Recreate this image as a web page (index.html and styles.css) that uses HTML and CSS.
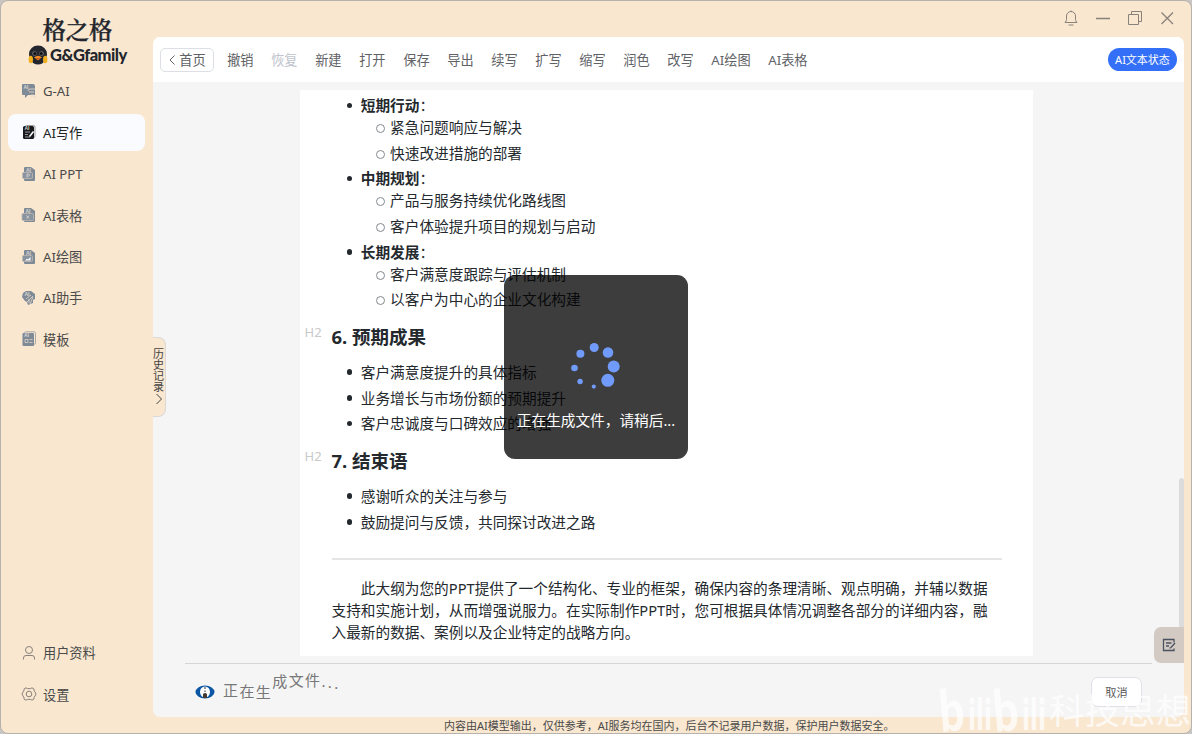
FILE: index.html
```
<!DOCTYPE html>
<html lang="zh-CN">
<head>
	<meta charset="utf-8">
	<title>AI写作</title>
	<link rel="stylesheet" href="styles.css">
</head>
<body>
<div class="window">
	<aside class="sidebar">
		<div class="logo">
			<div class="logo-cn">格之格</div>
			<div class="logo-en">
				<svg width="20" height="20" viewBox="0 0 20 20">
					<path d="M1 9a9 8.500 0 0 1 18 0c0 3-1.500 4-2.500 6.500Q15 19.500 10 19.500T3.500 15.500C2.500 13 1 12 1 9z" fill="#23262c"/>
					<ellipse cx="2.800" cy="14.500" rx="2.200" ry="3.800" fill="#f2b01e"/>
					<ellipse cx="17.200" cy="14.500" rx="2.200" ry="3.800" fill="#f2b01e"/>
					<circle cx="6.500" cy="8.500" r="2.300" fill="#6d6f75"/><circle cx="13.500" cy="8.500" r="2.300" fill="#6d6f75"/>
					<circle cx="6.800" cy="8.500" r="1.600" fill="#111"/><circle cx="13.200" cy="8.500" r="1.600" fill="#111"/>
					<path d="M6 12.500q4-3.500 8 0-1.500 1-2.200 1-.3 1.700-1.800 1.700t-1.800-1.700q-1 0-2.200-1z" fill="#f48a24"/>
					<path d="M8.500 13.300h3l-.7 1H9.200z" fill="#b43b20"/>
				</svg>
				<span>G&amp;Gfamily</span>
			</div>
		</div>
		<nav class="menu">
			<a class="item">
				<svg width="16" height="16" viewBox="0 0 16 16"><path d="M2 1h10q2 0 2 2v9H7l-3 3v-3H2q-1 0-1-1V2q0-1 1-1z" fill="#7f8a97"/><path d="M7 8q0-2 2-2h5M8 9h5M10 12h3l2 3M9 14h6" fill="none" stroke="#ecdccb" stroke-width=".8"/><text x="2.500" y="6" class="tag">AI</text></svg>
				<span>G-AI</span>
			</a>
			<a class="item active">
				<svg width="16" height="16" viewBox="0 0 16 16"><rect x="4" y="1.500" width="10" height="12" rx="1.500" fill="#fff" stroke="#999"/><rect x="2" y="2" width="11" height="13" rx="1.500" fill="#17191d"/><path d="M4 8h5M4 10.500h3M4 13h5" stroke="#bbb" stroke-width=".8"/><path d="M12.500 7.500 8.500 12.500" stroke="#fff" stroke-width="1.600"/><text x="3.500" y="6.300" class="tag">AI</text></svg>
				<span>AI写作</span>
			</a>
			<a class="item">
				<svg width="16" height="16" viewBox="0 0 16 16"><path d="M4 1h6l4 3v10q0 1-1 1H4q-1 0-1-1V2q0-1 1-1z" fill="#7f8a97"/><rect x="1.500" y="6.500" width="10" height="6" rx="1" fill="#8994a0" stroke="#bfb8b0" stroke-width=".8"/><path d="M6 11.500V8h1.500q1 0 1 1t-1 1H6" fill="none" stroke="#e5ddd2" stroke-width=".7"/><text x="5" y="5.500" class="tag">AI</text></svg>
				<span>AI PPT</span>
			</a>
			<a class="item">
				<svg width="16" height="16" viewBox="0 0 16 16"><path d="M4 1h6l4 3v10q0 1-1 1H4q-1 0-1-1V2q0-1 1-1z" fill="#7f8a97"/><rect x="1" y="6.500" width="11.500" height="7" rx="1" fill="#8994a0" stroke="#bfb8b0" stroke-width=".8"/><path d="m5.500 8.500 2.500 3m0-3-2.500 3" stroke="#e5ddd2" stroke-width=".8"/><text x="4.500" y="5.500" class="tag">AI</text></svg>
				<span>AI表格</span>
			</a>
			<a class="item">
				<svg width="16" height="16" viewBox="0 0 16 16"><path d="M4 1h6l4 3v10q0 1-1 1H4q-1 0-1-1V2q0-1 1-1z" fill="#7f8a97"/><rect x="1.500" y="6.500" width="10" height="6" rx="1" fill="#8994a0" stroke="#bfb8b0" stroke-width=".8"/><path d="m4 11.500 2-1.700 1 .7L9.500 8v3.500z" fill="#fff"/><text x="5" y="5.500" class="tag">AI</text></svg>
				<span>AI绘图</span>
			</a>
			<a class="item">
				<svg width="16" height="16" viewBox="0 0 16 16"><path d="M5 1h5l4 3v5l-2 1v3l-5 2-1-3-2-1-3-4 1-4z" fill="#7f8a97"/><path d="m5 9 5-4M6 12l6-6M9 14l3-7M8 9v4" stroke="#ecdccb" stroke-width=".8"/><text x="3.500" y="5.500" class="tag">AI</text></svg>
				<span>AI助手</span>
			</a>
			<a class="item">
				<svg width="16" height="16" viewBox="0 0 16 16"><rect x="3.500" y=".8" width="11" height="12.500" rx="1.500" fill="none" stroke="#a9a8a6"/><rect x="1.500" y="2" width="11.500" height="13" rx="1" fill="#7f8a97"/><path d="M4 8.500h3v3H4zM8.500 8.500h3M8.500 11.500h3" fill="none" stroke="#ddd3c7" stroke-width=".8"/><text x="3" y="6.300" class="tag">AI</text></svg>
				<span>模板</span>
			</a>
		</nav>
		<nav class="menu bottom">
			<a class="item">
				<svg width="16" height="16" viewBox="0 0 16 16" class="line"><circle cx="8" cy="5" r="3.500"/><path d="M2.500 14.500V13q0-2.500 2.500-2.500h6q2.500 0 2.500 2.500v1.500"/></svg>
				<span>用户资料</span>
			</a>
			<a class="item">
				<svg width="16" height="16" viewBox="0 0 16 16" class="line"><path d="M5 1.800q1.500 1.200 3 .8 1.500.4 3-.8l2 1.200q-.3 2 1 3l1 2-1 2q-1.300 1-1 3l-2 1.200q-1.500-1.200-3-.8-1.500-.4-3 .8L3 13q.3-2-1-3L1 8l1-2q1.300-1 1-3z"/><circle cx="8" cy="8" r="2.800"/></svg>
				<span>设置</span>
			</a>
		</nav>
	</aside>

	<div class="content">
		<header class="titlebar">
			<svg width="16" height="18" viewBox="0 0 16 18" class="line"><path d="M8 1.500v1M2 13.500h12q-1.500-1.500-1.500-3V7a4.500 4.500 0 0 0-9 0v3.500q0 1.500-1.500 3zM5.500 16h5"/></svg>
			<svg width="16" height="18" viewBox="0 0 16 18" class="line"><path d="M1 9.500h14" stroke-width="1.400"/></svg>
			<svg width="16" height="18" viewBox="0 0 16 18" class="line"><path d="M1.500 5.500h10v10h-10zM4.500 5V2.500h10v10H12"/></svg>
			<svg width="16" height="18" viewBox="0 0 16 18" class="line"><path d="m2.500 3.500 11.500 11.500m0-11.500L2.500 15" stroke-width="1.300"/></svg>
		</header>

		<main class="panel">
			<div class="toolbar">
				<button class="home"><svg width="8" height="12" viewBox="0 0 8 12"><path d="M6.500 1.500 2 6l4.500 4.500" fill="none" stroke="#606266"/></svg>首页</button>
				<span>撤销</span>
				<span class="disabled">恢复</span>
				<span>新建</span>
				<span>打开</span>
				<span>保存</span>
				<span>导出</span>
				<span>续写</span>
				<span>扩写</span>
				<span>缩写</span>
				<span>润色</span>
				<span>改写</span>
				<span>AI绘图</span>
				<span>AI表格</span>
				<b class="status">AI文本状态</b>
			</div>

			<div class="editor">
				<article class="paper">
					<ul>
						<li><strong>短期行动</strong>：
							<ul>
								<li>紧急问题响应与解决</li>
								<li>快速改进措施的部署</li>
							</ul>
						</li>
						<li><strong>中期规划</strong>：
							<ul>
								<li>产品与服务持续优化路线图</li>
								<li>客户体验提升项目的规划与启动</li>
							</ul>
						</li>
						<li><strong>长期发展</strong>：
							<ul>
								<li>客户满意度跟踪与评估机制</li>
								<li>以客户为中心的企业文化构建</li>
							</ul>
						</li>
					</ul>
					<h2><i class="mark">H2</i>6. 预期成果</h2>
					<ul>
						<li>客户满意度提升的具体指标</li>
						<li>业务增长与市场份额的预期提升</li>
						<li>客户忠诚度与口碑效应的增强</li>
					</ul>
					<h2><i class="mark">H2</i>7. 结束语</h2>
					<ul>
						<li>感谢听众的关注与参与</li>
						<li>鼓励提问与反馈，共同探讨改进之路</li>
					</ul>
					<hr>
					<p>此大纲为您的PPT提供了一个结构化、专业的框架，确保内容的条理清晰、观点明确，并辅以数据<br>支持和实施计划，从而增强说服力。在实际制作PPT时，您可根据具体情况调整各部分的详细内容，融<br>入最新的数据、案例以及企业特定的战略方向。</p>
				</article>
			</div>

			<div class="progress">
				<svg width="20" height="14" viewBox="0 0 20 14"><ellipse cx="10" cy="7" rx="9.500" ry="6.500" fill="#0b57a4"/><ellipse cx="10" cy="7" rx="5" ry="5.500" fill="#fff"/><path d="M8 13V9q2-2 4 0v4z" fill="#443c32"/><path d="M10 2v2M10 5.500v1.500" stroke="#333"/></svg>
				<div class="wave">
					<span>正</span><span class="w1">在</span><span class="w2">生</span><span class="w3">成</span><span class="w4">文</span><span class="w4">件</span><span class="dot w5">.</span><span class="dot w6">.</span><span class="dot w7">.</span>
				</div>
				<button class="cancel">取消</button>
			</div>

			<div class="history">历史记录<svg width="8" height="12" viewBox="0 0 8 12"><path d="m1.500 1 5 5-5 5" fill="none" stroke="#444"/></svg></div>
			<div class="scrollbar"></div>
			<div class="edit">
				<svg width="14" height="14" viewBox="0 0 14 14" fill="none" stroke="#4a5260" stroke-width="1.300"><path d="M12 4.500V1.500H1.500v11H12V10.500M4 5h5.500M4 8h3"/><path d="m13 5-4 4.500-1.500.8"/></svg>
			</div>
		</main>

		<footer class="notice">内容由AI模型输出，仅供参考，AI服务均在国内，后台不记录用户数据，保护用户数据安全。</footer>
	</div>

	<div class="loading">
		<svg width="52" height="52" viewBox="0 0 52 52" fill="#709bfa">
			<circle cx="24.200" cy="7.500" r="4.500"/>
			<circle cx="38" cy="12.500" r="5.300"/>
			<circle cx="43.700" cy="26.500" r="6"/>
			<circle cx="37.800" cy="40.300" r="6.500"/>
			<circle cx="23.800" cy="46.600" r="2.100"/>
			<circle cx="10.100" cy="41.500" r="2.700"/>
			<circle cx="4.500" cy="28" r="3.300"/>
			<circle cx="10.400" cy="13.800" r="4"/>
		</svg>
		<p>正在生成文件，请稍后...</p>
	</div>
</div>
<div class="watermark">
	<svg width="110" height="56" viewBox="0 0 110 56" fill="#fff">
		<g class="bili">
			<text x="0" y="49" font-size="58" textLength="25" lengthAdjust="spacingAndGlyphs" transform="rotate(-5 12 49)">b</text>
			<text x="27" y="48" font-size="44" textLength="24" lengthAdjust="spacingAndGlyphs">ili</text>
			<text x="54" y="49" font-size="58" textLength="25" lengthAdjust="spacingAndGlyphs" transform="rotate(-5 66 49)">b</text>
			<text x="81" y="48" font-size="44" textLength="24" lengthAdjust="spacingAndGlyphs">ili</text>
		</g>
	</svg>
	<span>科技思想</span>
</div>
</body>
</html>
```
FILE: styles.css
```
*{
	box-sizing: border-box;
}
body{
	margin: 0;
	height: 734px;
	overflow: hidden;
	position: relative;
	background-color: #c9c5c2;
	font-family: "Noto Sans", "Noto Sans CJK SC", sans-serif;
	font-size: 13.2px;
	color: #4a4a4a;
}
svg{
	flex: none;
}
button{
	font: inherit;
	color: inherit;
	background-color: #fff;
	padding: 0;
}
.window{
	position: relative;
	display: flex;
	height: 734px;
	background-color: #f9e7d0;
	border: 1px solid #b5b1ad;
	border-radius: 8px;
	overflow: hidden;
}
.line{
	fill: none;
	stroke: #89827b;
	stroke-width: 1;
}

/* sidebar */
.sidebar{
	width: 152px;
	display: flex;
	flex-direction: column;
	padding: 13.5px 8px 20.5px 6.5px;
}
.logo{
	height: 58px;
	color: #23262c;
}
.logo-cn{
	padding-left: 35px;
	font-family: "Noto Serif CJK SC", "Noto Sans CJK SC", serif;
	font-size: 23.3px;
	font-weight: 600;
	-webkit-text-stroke: .3px #23262c;
	line-height: 29px;
}
.logo-en{
	display: flex;
	align-items: center;
	padding-left: 20.5px;
	gap: 2px;
	height: 23px;
	font-family: Lato, sans-serif;
	font-size: 16.5px;
	font-weight: 900;
	letter-spacing: -0.5px;
}
.menu{
	display: flex;
	flex-direction: column;
	gap: 4.4px;
}
.bottom{
	margin-top: auto;
}
.item{
	display: flex;
	align-items: center;
	height: 37px;
	padding-left: 13px;
	gap: 6.5px;
	border-radius: 8px;
}
.active{
	background-color: #f9fbfe;
	color: #222;
}
.tag{
	font: bold 5px "Liberation Sans", sans-serif;
	fill: #d9d5d0;
}

/* right side */
.content{
	flex: 1;
	display: flex;
	flex-direction: column;
	padding-right: 7px;
}
.titlebar{
	height: 36px;
	display: flex;
	justify-content: flex-end;
	align-items: center;
	gap: 16px;
	padding: 0 9.5px 2px 0;
}
.panel{
	position: relative;
	height: 680px;
	display: flex;
	flex-direction: column;
	background-color: #f5f5f5;
	border-radius: 7px;
}
.toolbar{
	display: flex;
	align-items: center;
	height: 45px;
	gap: 17.65px;
	padding: 0 7px;
	background-color: #fff;
	border-radius: 7px 7px 0 0;
	color: #606266;
}
.home{
	display: flex;
	align-items: center;
	justify-content: center;
	gap: 3px;
	width: 54px;
	height: 24px;
	margin-right: -4.5px;
	border: 1px solid #dcdfe6;
	border-radius: 5px;
}
.disabled{
	color: #c0c4cc;
}
.status{
	margin-left: auto;
	width: 69px;
	line-height: 23px;
	border-radius: 12px;
	background-color: #3370f7;
	color: #fff;
	font-size: 11px;
	font-weight: normal;
	text-align: center;
}
.editor{
	height: 581px;
	padding: 8px 0 0 147px;
}
.paper{
	width: 733px;
	height: 566px;
	padding: 4px 31.5px 0;
	background-color: #fff;
	font-size: 14.67px;
	line-height: 22px;
	color: #24292e;
}
.paper ul{
	margin: 0;
	padding-left: 29.3px;
	list-style: none;
}
.paper li{
	position: relative;
}
.paper li + li{
	margin-top: 3.7px;
}
/* list dots hang left of the text */
.paper li::before{
	content: "";
	position: absolute;
	left: -14px;
	top: 8.5px;
	width: 5.5px;
	height: 5.5px;
	border-radius: 50%;
	background-color: #24292e;
}
.paper li li::before{
	left: -14px;
	top: 8px;
	width: 7px;
	height: 7px;
	background-color: transparent;
	border: 1px solid #858a8e;
}
.paper h2{
	position: relative;
	margin: 15px 0 12.5px;
	font-size: 18.5px;
	line-height: 23px;
}
.mark{
	position: absolute;
	left: -27px;
	top: -4px;
	font-size: 13px;
	font-style: normal;
	font-weight: normal;
	color: #c8c9cb;
}
.paper hr{
	height: 1.5px;
	margin: 25.5px 0 17px;
	border: 0;
	background-color: #e3e5e7;
}
.paper p{
	margin: 0;
	text-indent: 2em;
	white-space: nowrap;
}
.progress{
	display: flex;
	height: 54px;
	margin: 0 32px;
	padding-left: 10px;
	border-top: 1px solid #d5d5d5;
}
.progress > svg{
	margin-top: 21px;
}
.wave{
	display: flex;
	margin: 15px 0 0 8px;
	gap: 1.4px;
	font-size: 15px;
	line-height: 22px;
	color: #777;
}
.wave .dot{
	width: 5px;
}
.w1{ transform: translateY(1px); }
.w2{ transform: translateY(2px); }
.w3{ transform: translateY(-9px); }
.w4{ transform: translateY(-10px); }
.w5{ transform: translateY(-9px); }
.w6{ transform: translateY(-8px); }
.w7{ transform: translateY(-7px); }
.cancel{
	width: 51px;
	height: 30px;
	margin: 13px 10px 0 auto;
	border: 1px solid #dfe0e8;
	border-radius: 7px;
	font-size: 11.2px;
	color: #555;
}
.history{
	position: absolute;
	left: 0;
	top: 300px;
	width: 13px;
	height: 80px;
	display: flex;
	flex-direction: column;
	align-items: center;
	padding-top: 10px;
	background-color: #f9e7d0;
	border: 1px solid #dcd8d5;
	border-left: 0;
	border-radius: 0 8px 8px 0;
	font-size: 11px;
	line-height: 11px;
	color: #444;
	word-break: break-all;
}
.history svg{
	margin-top: 1px;
}
.scrollbar{
	position: absolute;
	right: 0;
	top: 441px;
	width: 5px;
	height: 180px;
	border-radius: 3px;
	background-color: #dcdcdc;
}
.edit{
	position: absolute;
	right: 0;
	top: 590px;
	width: 30px;
	height: 36px;
	display: flex;
	align-items: center;
	justify-content: center;
	background-color: #d3cac4;
	border-radius: 7px 0 0 7px;
}
.notice{
	height: 16px;
	font-size: 11px;
	line-height: 17px;
	padding-left: 291px;
	white-space: nowrap;
}

/* overlays */
.loading{
	position: absolute;
	left: 503px;
	top: 274px;
	width: 184px;
	height: 184px;
	display: flex;
	flex-direction: column;
	align-items: center;
	padding-top: 65px;
	border-radius: 11px;
	background-color: rgba(0, 0, 0, .76);
	font-size: 14.67px;
	color: #fff;
}
.loading p{
	margin: 17px 0 0;
	line-height: 22px;
	white-space: nowrap;
}
.watermark{
	position: absolute;
	left: 941px;
	top: 682px;
	display: flex;
	color: #fff;
	opacity: .72;
	font-size: 35.5px;
	line-height: 56px;
	white-space: nowrap;
}
.watermark svg{
	margin-right: -2px;
	overflow: visible;
}
.bili{
	font-family: Lato, sans-serif;
	font-weight: 900;
}
```
